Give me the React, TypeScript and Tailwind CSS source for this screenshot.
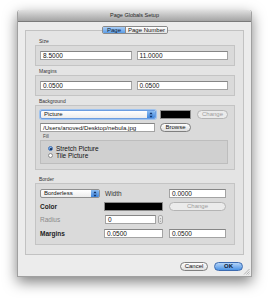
import React from 'react';

const Field = ({ value, className = '', small = false }: { value: string; className?: string; small?: boolean }) => (
    <div className={`h-[9px] bg-white border border-[#a3a3a3] border-t-[#868686] ${small ? 'text-[6.1px]' : 'text-[6.5px]'} leading-[7px] text-[#111] px-[2px] flex items-center overflow-hidden whitespace-nowrap ${className}`}>
        {value}
    </div>
);

const PillButton = ({ label, disabled = false, className = '' }: { label: string; disabled?: boolean; className?: string }) => (
    <div
        className={`h-[9px] rounded-full border flex items-center justify-center text-[6px] leading-[7px] ${
            disabled
                ? 'border-[#b4b4b4] bg-[#ebebeb] text-[#9c9c9c]'
                : 'border-[#7f7f7f] bg-gradient-to-b from-white to-[#dedede] text-[#111]'
        } ${className}`}
    >
        {label}
    </div>
);

const Popup = ({ label, focused = false, className = '' }: { label: string; focused?: boolean; className?: string }) => (
    <div
        className={`h-[9px] rounded-[2px] border flex items-stretch overflow-hidden bg-gradient-to-b from-white to-[#ececec] ${
            focused ? 'border-[#6c9de0] ring-1 ring-[#9fc3ef]' : 'border-[#8f8f8f]'
        } ${className}`}
    >
        <div className="flex-1 pl-[3px] text-[6px] leading-[7px] flex items-center text-[#111]">{label}</div>
        <div className="w-[8px] bg-gradient-to-b from-[#8cbcf0] to-[#3f87df] flex items-center justify-center">
            <svg width="4" height="6" viewBox="0 0 4 6">
                <path d="M2 0.3 L3.6 2.3 H0.4 Z M2 5.7 L3.6 3.7 H0.4 Z" fill="#0d2f66" />
            </svg>
        </div>
    </div>
);

const Radio = ({ label, checked = false }: { label: string; checked?: boolean }) => (
    <div className="h-[7px] flex items-center gap-[3px] pl-[7px]">
        <div
            className={`w-[5px] h-[5px] rounded-full border flex items-center justify-center ${
                checked ? 'border-[#3f6fb4] bg-gradient-to-b from-[#9cc6f3] to-[#3d86dc]' : 'border-[#8a8a8a] bg-white'
            }`}
        >
            {checked && <div className="w-[2px] h-[2px] rounded-full bg-[#10223f]" />}
        </div>
        <span className="text-[6.5px] leading-[7px] text-[#111]">{label}</span>
    </div>
);

const GroupLabel = ({ text }: { text: string }) => (
    <div className="h-[7px] pl-[4px] text-[5px] leading-[7px] text-[#333]">{text}</div>
);

export default function App() {
    return (
        <div className="w-[269px] h-[300px] bg-white pt-[10px] pl-[17px] font-['Liberation_Sans',Arial,sans-serif]">
            {/* window */}
            <div className="w-[235px] h-[267px] flex flex-col rounded-t-[3px] shadow-[0_5px_14px_rgba(0,0,0,0.5)] border border-[#a0a0a0] border-t-0">
                <div className="h-[12px] rounded-t-[3px] bg-gradient-to-b from-[#e0e0e0] to-[#a4a4a4] border-b border-[#7a7a7a] flex items-center justify-center text-[5.5px] text-[#262626]">
                    Page Globals Setup
                </div>

                <div className="relative flex-1 bg-[#ececec] px-[7px] flex flex-col">
                    {/* tabs */}
                    <div className="relative z-10 mt-[4px] h-[8px] flex justify-center pl-[1px]">
                        <div className="flex h-[8px] rounded-[2px] border border-[#8a8a8a] overflow-hidden text-[6px] leading-[6px]">
                            <div className="w-[22px] bg-gradient-to-b from-[#a9cdf5] to-[#5b9ce6] flex items-center justify-center text-[#0c1a33]">Page</div>
                            <div className="w-[42px] border-l border-[#8a8a8a] bg-gradient-to-b from-white to-[#e4e4e4] flex items-center justify-center text-[#111]">Page Number</div>
                        </div>
                    </div>

                    {/* tab box */}
                    <div className="-mt-[4px] h-[225px] border border-[#c2c2c2] bg-[#e4e4e4] pl-[9px] pr-[8px] pt-[7px] flex flex-col">
                        <GroupLabel text="Size" />
                        <div className="h-[21px] border border-[#c4c4c4] bg-[#dadada] pl-[4px] pr-[6px] grid grid-cols-2 gap-[5px] items-center">
                            <Field value="8.5000" />
                            <Field value="11.0000" />
                        </div>

                        <div className="mt-[2px]">
                            <GroupLabel text="Margins" />
                        </div>
                        <div className="h-[21px] border border-[#c4c4c4] bg-[#dadada] pl-[4px] pr-[6px] grid grid-cols-2 gap-[5px] items-center">
                            <Field value="0.0500" />
                            <Field value="0.0500" />
                        </div>

                        <div className="mt-[2px]">
                            <GroupLabel text="Background" />
                        </div>
                        <div className="h-[65px] border border-[#c4c4c4] bg-[#dadada] pl-[4px] pr-[6px] pt-[4px] flex flex-col">
                            <div className="flex items-center h-[9px]">
                                <Popup label="Picture" focused className="w-[116px]" />
                                <div className="ml-[4px] w-[31px] h-[9px] bg-black border border-[#8c8c8c]" />
                                <PillButton label="Change" disabled className="ml-[6px] w-[31px]" />
                            </div>
                            <div className="mt-[4px] flex items-center h-[9px]">
                                <Field value="/Users/anoved/Desktop/nebula.jpg" small className="w-[115px]" />
                                <PillButton label="Browse" className="ml-[5px] w-[31px]" />
                            </div>
                            <div className="mt-[2px] h-[6px] pl-[3px] text-[4.5px] leading-[6px] text-[#444]">Fill</div>
                            <div className="h-[24px] border border-[#bdbdbd] bg-[#d0d0d0] pt-[4px] flex flex-col">
                                <Radio label="Stretch Picture" checked />
                                <Radio label="Tile Picture" />
                            </div>
                        </div>

                        <div className="mt-[6px]">
                            <GroupLabel text="Border" />
                        </div>
                        <div className="h-[62px] border border-[#c4c4c4] bg-[#dadada] pl-[4px] pr-[6px] pt-[5px] grid grid-cols-[60px_59px_59px] gap-x-[4px] gap-y-[4px] content-start">
                            <Popup label="Borderless" />
                            <div className="h-[9px] pl-[1px] flex items-center text-[6.5px] text-[#333]">Width</div>
                            <Field value="0.0000" className="ml-[2px]" />

                            <div className="h-[9px] flex items-center text-[6.5px] font-bold text-[#222]">Color</div>
                            <div className="h-[9px] bg-black border border-[#8c8c8c]" />
                            <PillButton label="Change" disabled className="ml-[2px]" />

                            <div className="h-[9px] flex items-center text-[6.5px] text-[#8a8a8a]">Radius</div>
                            <div className="flex items-center gap-[2px]">
                                <Field value="0" className="w-[51px] ml-[1px]" />
                                <div className="w-[5px] h-[9px] rounded-[2px] border border-[#a8a8a8] bg-[#e9e9e9] flex items-center justify-center">
                                    <svg width="3" height="6" viewBox="0 0 3 6">
                                        <path d="M1.5 0.8 L2.6 2.2 H0.4 Z M1.5 5.2 L2.6 3.8 H0.4 Z" fill="#a0a0a0" />
                                    </svg>
                                </div>
                            </div>
                            <div />

                            <div className="mt-[1px] h-[9px] flex items-center text-[6.5px] font-bold text-[#222]">Margins</div>
                            <Field value="0.0500" className="mt-[1px]" />
                            <Field value="0.0500" className="mt-[1px] ml-[2px]" />
                        </div>
                    </div>

                    {/* buttons */}
                    <div className="mt-[7px] flex justify-end gap-[6px] pr-[1px]">
                        <PillButton label="Cancel" className="w-[28px]" />
                        <div className="w-[29px] h-[9px] rounded-full border border-[#3d6bb0] bg-gradient-to-b from-[#b4d4f7] to-[#4b93e4] flex items-center justify-center text-[6px] leading-[7px] font-bold text-[#0c1a33]">
                            OK
                        </div>
                    </div>

                    {/* resize grip */}
                    <svg className="absolute right-[1px] bottom-[1px]" width="7" height="7" viewBox="0 0 7 7">
                        <path d="M6.5 1 L1 6.5 M6.5 3.5 L3.5 6.5 M6.5 5.5 L5.5 6.5" stroke="#9c9c9c" strokeWidth="0.7" />
                    </svg>
                </div>
            </div>
        </div>
    );
}
